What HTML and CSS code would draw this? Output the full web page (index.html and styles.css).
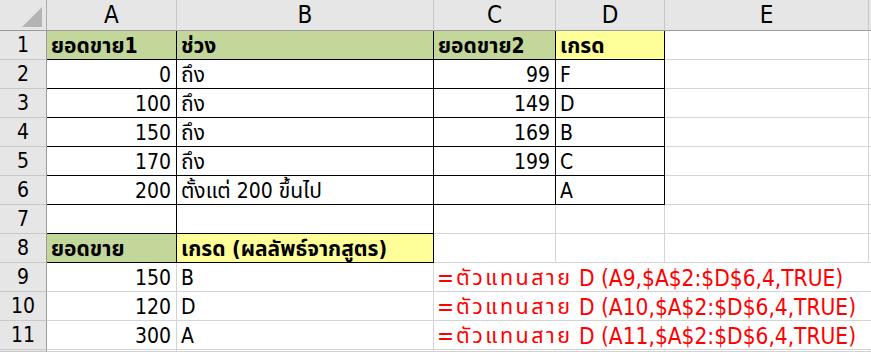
FILE: index.html
```html
<!DOCTYPE html>
<html>
<head>
<meta charset="utf-8">
<link rel="stylesheet" href="styles.css">
</head>
<body>
<div class="sheet">
  <div class="corner"><span class="tri"></span></div>
  <div class="ch">A</div>
  <div class="ch">B</div>
  <div class="ch">C</div>
  <div class="ch">D</div>
  <div class="ch">E</div>
  <div class="ch last"></div>

  <div class="rh">1</div>
  <div class="c bk green bold">ยอดขาย1</div>
  <div class="c bk green bold"><span>ช่วง</span></div>
  <div class="c bk green bold">ยอดขาย2</div>
  <div class="c bk yellow bold">เกรด</div>
  <div class="c"></div>
  <div class="c last"></div>

  <div class="rh">2</div>
  <div class="c bk r">0</div>
  <div class="c bk">ถึง</div>
  <div class="c bk r">99</div>
  <div class="c bk">F</div>
  <div class="c"></div>
  <div class="c last"></div>

  <div class="rh">3</div>
  <div class="c bk r">100</div>
  <div class="c bk">ถึง</div>
  <div class="c bk r">149</div>
  <div class="c bk">D</div>
  <div class="c"></div>
  <div class="c last"></div>

  <div class="rh">4</div>
  <div class="c bk r">150</div>
  <div class="c bk">ถึง</div>
  <div class="c bk r">169</div>
  <div class="c bk">B</div>
  <div class="c"></div>
  <div class="c last"></div>

  <div class="rh">5</div>
  <div class="c bk r">170</div>
  <div class="c bk">ถึง</div>
  <div class="c bk r">199</div>
  <div class="c bk">C</div>
  <div class="c"></div>
  <div class="c last"></div>

  <div class="rh">6</div>
  <div class="c bk r">200</div>
  <div class="c bk">ตั้งแต่ 200 ขึ้นไป</div>
  <div class="c bk r"></div>
  <div class="c bk">A</div>
  <div class="c"></div>
  <div class="c last"></div>

  <div class="rh">7</div>
  <div class="c bkr bkb"></div>
  <div class="c bkr bkb"></div>
  <div class="c"></div>
  <div class="c"></div>
  <div class="c"></div>
  <div class="c last"></div>

  <div class="rh">8</div>
  <div class="c bk green bold">ยอดขาย</div>
  <div class="c bk yellow bold">เกรด (ผลลัพธ์จากสูตร)</div>
  <div class="c"></div>
  <div class="c"></div>
  <div class="c"></div>
  <div class="c last"></div>

  <div class="rh">9</div>
  <div class="c r">150</div>
  <div class="c">B</div>
  <div class="c span red">=<span class="th">ตัวแทนสาย</span> D (A9,$A$2:$D$6,4,TRUE)</div>
  <div class="c last"></div>

  <div class="rh">10</div>
  <div class="c r">120</div>
  <div class="c">D</div>
  <div class="c span red">=<span class="th">ตัวแทนสาย</span> D (A10,$A$2:$D$6,4,TRUE)</div>
  <div class="c last"></div>

  <div class="rh">11</div>
  <div class="c r">300</div>
  <div class="c">A</div>
  <div class="c span red">=<span class="th">ตัวแทนสาย</span> D (A11,$A$2:$D$6,4,TRUE)</div>
  <div class="c last"></div>

  <div class="rh"></div>
  <div class="c"></div>
  <div class="c"></div>
  <div class="c"></div>
  <div class="c"></div>
  <div class="c"></div>
  <div class="c last"></div>
</div>
</body>
</html>
```
FILE: styles.css
```css
html, body {
  margin: 0;
  padding: 0;
  background: #ffffff;
  overflow: hidden;
}
.sheet {
  display: grid;
  grid-template-columns: 47px 130px 257px 122px 109px 204px 10px;
  grid-template-rows: 31px repeat(11, 29px) 2px;
  font-family: "DejaVu Sans Condensed", "DejaVu Sans", "Noto Sans Thai", sans-serif;
  font-size: 21px;
  color: #000;
  width: 871px;
  height: 352px;
  overflow: hidden;
}
.corner {
  background: #e6e6e6;
  border-right: 1px solid #ababab;
  border-bottom: 1px solid #9b9b9b;
  position: relative;
}
.tri {
  position: absolute;
  right: 4px;
  bottom: 3px;
  width: 0;
  height: 0;
  border-left: 20px solid transparent;
  border-bottom: 20px solid #b4b4b4;
}
.ch {
  background: #e6e6e6;
  border-right: 1px solid #c8c8c8;
  border-bottom: 1px solid #9b9b9b;
  display: flex;
  align-items: flex-end;
  justify-content: center;
  font-size: 24px;
  line-height: 28px;
  padding-bottom: 1px;
  box-sizing: border-box;
}
.rh {
  background: #e6e6e6;
  border-right: 1px solid #9b9b9b;
  border-bottom: 1px solid #c8c8c8;
  display: flex;
  align-items: flex-end;
  justify-content: center;
  line-height: 26px;
  padding-bottom: 1px;
  box-sizing: border-box;
}
.c {
  border-right: 1px solid #d4d4d4;
  border-bottom: 1px solid #d4d4d4;
  box-sizing: border-box;
  padding: 0 5px 0 4px;
  white-space: nowrap;
  line-height: 26px;
  display: flex;
  align-items: flex-end;
  overflow: visible;
}
.c.r { justify-content: flex-end; }
.c.bk { border-right-color: #000; border-bottom-color: #000; }
.c.bkr { border-right-color: #000; }
.c.bkb { border-bottom-color: #000; }
.last { border-right: none; }
.green { background: #c4d79b; }
.yellow { background: #ffff99; }
.bold { font-weight: bold; }
.span {
  grid-column: span 3;
  border-right: none;
  padding-left: 3px;
  white-space: pre;
  font-size: 22.5px;
}
.th {
  font-size: 21.5px;
  letter-spacing: 2.5px;
  padding-left: 2px;
}
.red { color: #ff0000; }
```
